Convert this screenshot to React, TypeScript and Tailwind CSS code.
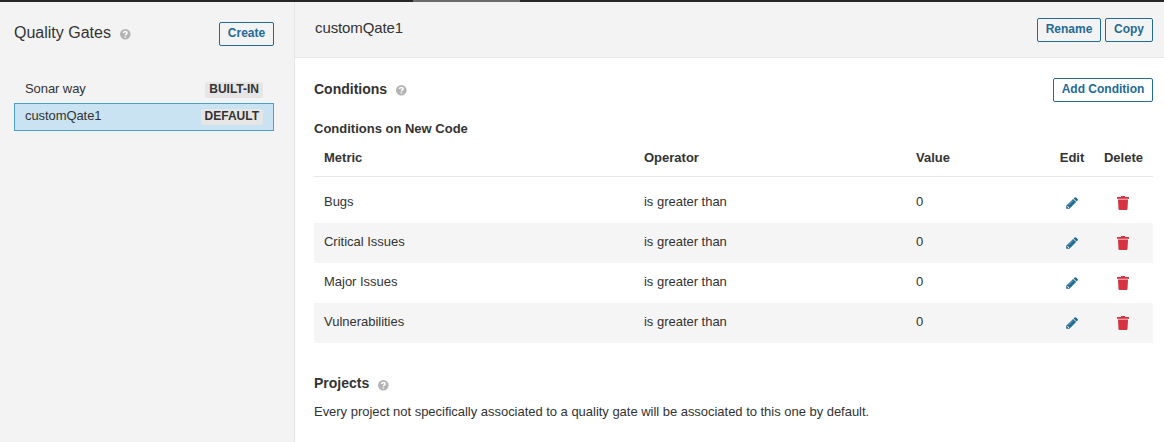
import React from "react";

type Gate = { name: string; badge: string; selected?: boolean };

const gates: Gate[] = [
  { name: "Sonar way", badge: "BUILT-IN" },
  { name: "customQate1", badge: "DEFAULT", selected: true },
];

const metrics = ["Bugs", "Critical Issues", "Major Issues", "Vulnerabilities"];

function HelpIcon() {
  return (
    <svg className="mt-[7px] ml-[9px] h-[10.6px] w-[10.6px] shrink-0" viewBox="0 0 12 12">
      <circle cx="6" cy="6" r="6" fill="#b4b4b4" />
      <path
        d="M4 4.6C4.1 3.3 4.9 2.7 6 2.7c1.200 0 2 .7 2 1.700 0 1.300-1.900 1.300-1.900 2.700M6.100 8.200v1.500"
        fill="none"
        stroke="#fff"
        strokeWidth="1.700"
      />
    </svg>
  );
}

function PencilIcon() {
  return (
    <svg className="h-3 w-3" viewBox="0 0 12 12">
      <path
        fill="#236a97"
        fillRule="evenodd"
        d="M8.700.5a1 1 0 0 1 1.400 0l1.500 1.500a1 1 0 0 1 0 1.400L10.500 4.500 7.600 1.600zM7.100 2 10.100 5 3.400 11.800H.2V8.700zM1.700 8.900 1.200 9.400v.7h.8v.8h.6l.6-.6z"
      />
      <path d="M6.900 3.600 2.600 7.900" stroke="#8fb5cd" strokeWidth=".8" />
    </svg>
  );
}

function TrashIcon() {
  return (
    <svg className="h-[14px] w-3" viewBox="0 0 12 14">
      <path fill="#d4333f" d="M4 0h4v1h4v1H0V1h4zM1 4h10l-.5 9q-.1 1-1 1H2.500q-.9 0-1-1z" />
      <path fill="#dc5963" d="M0 2h12v1H0z" />
      <path fill="#eb969c" d="M1 3h10v1H1z" />
    </svg>
  );
}

function Button({ children, className }: { children: React.ReactNode; className: string }) {
  return (
    <button
      className={`h-6 rounded-[2px] border border-[#236a97] pb-[2px] text-center text-[12px] leading-5 font-bold text-[#236a97] ${className}`}
    >
      {children}
    </button>
  );
}

export default function App() {
  return (
    <div className="flex h-[442px] w-[1164px] flex-col overflow-hidden bg-white font-['Liberation_Sans',Arial,sans-serif] text-[13px] leading-5 text-[#333]">
      <div className="h-[2px] shrink-0 bg-[#262626]">
        <div className="ml-[413px] h-[2px] w-[107px] bg-[#6a6a6a]" />
      </div>
      <div className="flex min-h-0 flex-1">
        <aside className="w-[295px] shrink-0 border-r border-[#e6e6e6] bg-[#f3f3f3] px-[14px] pt-5">
          <div className="flex h-6 w-[260px] items-start">
            <h1 className="text-[16px] leading-[22px]">Quality Gates</h1>
            <HelpIcon />
            <Button className="ml-auto w-[55px]">Create</Button>
          </div>
          <ul className="mt-[30px] w-[260px]">
            {gates.map((gate) => (
              <li
                key={gate.name}
                className={`flex items-start justify-between border pr-[10px] pl-[10px] ${
                  gate.selected
                    ? "h-7 border-[#4b9fd5] bg-[#cae3f2]"
                    : "h-[27px] border-transparent"
                }`}
              >
                <span className="leading-6 tracking-[-0.08px]">{gate.name}</span>
                <span className="mt-[5px] h-4 rounded-[3px] bg-[#e6e6e6] px-1 text-[12px] leading-[15px] font-bold">
                  {gate.badge}
                </span>
              </li>
            ))}
          </ul>
        </aside>
        <main className="min-w-0 flex-1">
          <header className="flex h-14 items-start border-b border-[#e6e6e6] bg-[#f3f3f3] pt-4 pr-[11px] pl-5">
            <h2 className="text-[15px] leading-5 tracking-[-0.1px]">customQate1</h2>
            <Button className="ml-auto w-16">Rename</Button>
            <Button className="ml-1 w-12">Copy</Button>
          </header>
          <div className="pr-[11px] pl-[19px]">
            <div className="flex items-start pt-5">
              <h3 className="text-[14px] leading-[22px] font-bold">Conditions</h3>
              <HelpIcon />
              <Button className="ml-auto w-[100px]">Add Condition</Button>
            </div>
            <h4 className="mt-[17px] font-bold">Conditions on New Code</h4>
            <table className="w-full table-fixed border-collapse text-left">
              <colgroup>
                <col className="w-[320px]" />
                <col className="w-[272px]" />
                <col />
                <col className="w-[44px]" />
                <col className="w-[59px]" />
              </colgroup>
              <thead>
                <tr className="h-[37px] border-b border-[#e6e6e6]">
                  <th className="px-[10px] pt-[2px]">Metric</th>
                  <th className="px-[10px] pt-[2px]">Operator</th>
                  <th className="px-[10px] pt-[2px]">Value</th>
                  <th className="pt-[2px] text-center">Edit</th>
                  <th className="pt-[2px] text-center">Delete</th>
                </tr>
              </thead>
              <tbody>
                <tr className="h-[7px]">
                  <td colSpan={5} />
                </tr>
                {metrics.map((metric) => (
                  <tr key={metric} className="h-10 tracking-[-0.02px] odd:bg-[#f5f5f5]">
                    <td className="px-[10px] pb-[2px]">{metric}</td>
                    <td className="px-[10px] pb-[2px]">is greater than</td>
                    <td className="px-[10px] pb-[2px]">0</td>
                    <td>
                      <div className="flex justify-center">
                        <PencilIcon />
                      </div>
                    </td>
                    <td>
                      <div className="flex justify-center pr-[2px]">
                        <TrashIcon />
                      </div>
                    </td>
                  </tr>
                ))}
              </tbody>
            </table>
            <div className="mt-[30px] flex items-start">
              <h3 className="text-[14px] leading-5 font-bold">Projects</h3>
              <HelpIcon />
            </div>
            <p className="mt-[9px] tracking-[-0.027px]">
              Every project not specifically associated to a quality gate will be associated to this one by default.
            </p>
          </div>
        </main>
      </div>
    </div>
  );
}
